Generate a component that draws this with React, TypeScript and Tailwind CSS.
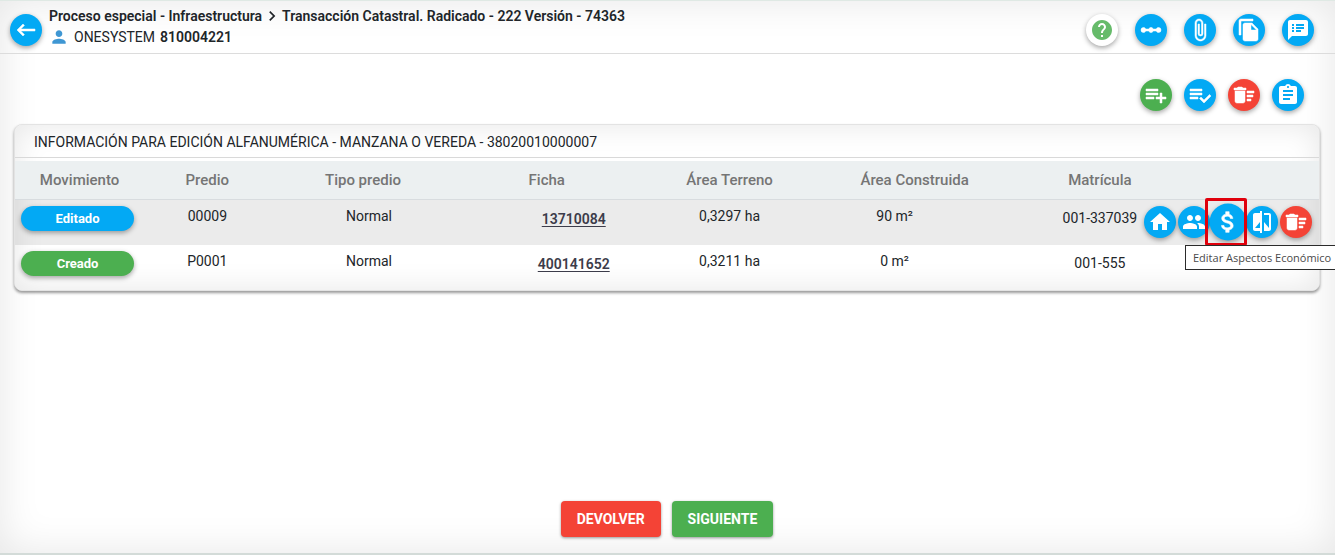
import type { ComponentType, ReactNode } from "react";
import {
  MdAssignment,
  MdAttachFile,
  MdAttachMoney,
  MdCompare,
  MdDeleteSweep,
  MdFileCopy,
  MdHelp,
  MdHome,
  MdKeyboardArrowRight,
  MdKeyboardBackspace,
  MdLinearScale,
  MdPeople,
  MdPerson,
  MdSpeakerNotes,
} from "react-icons/md";

type IconProps = { className?: string };

function ListAddIcon({ className }: IconProps) {
  return (
    <svg viewBox="0 0 24 24" fill="currentColor" stroke="currentColor" className={className}>
      <path d="M14 10H2v2h12v-2zm0-4H2v2h12V6zm4 8v-4h-2v4h-4v2h4v4h2v-4h4v-2h-4zM2 16h8v-2H2v2z" />
    </svg>
  );
}

function ListCheckIcon({ className }: IconProps) {
  return (
    <svg viewBox="0 0 24 24" fill="currentColor" stroke="currentColor" className={className}>
      <path d="M14 10H2v2h12v-2zm0-4H2v2h12V6zM2 16h8v-2H2v2zm19.5-4.5L23 13l-6.99 7-4.51-4.5L13 14l3.01 3 5.49-5.5z" />
    </svg>
  );
}

const tones = {
  blue: "bg-[#03a9f4] text-white",
  green: "bg-[#4caf50] text-white",
  red: "bg-[#f44336] text-white",
  white: "bg-white text-[#66bb6a]",
};

type RoundButtonProps = {
  icon: ComponentType<IconProps>;
  label: string;
  tone?: keyof typeof tones;
  large?: boolean;
  bold?: boolean;
};

function RoundButton({ icon: Icon, label, tone = "blue", large, bold }: RoundButtonProps) {
  return (
    <button
      type="button"
      aria-label={label}
      className={`flex size-8 shrink-0 items-center justify-center rounded-full shadow-[0_2px_5px_rgba(0,0,0,0.35)] ${tones[tone]} ${large ? "scale-115" : ""}`}
    >
      <Icon className={`size-6 ${bold ? "stroke-[0.5] [&>path[fill=none]]:stroke-none" : ""}`} />
    </button>
  );
}

type Row = {
  state: string;
  stateClass: string;
  predio: string;
  tipo: string;
  ficha: string;
  terreno: string;
  construida: string;
  matricula: string;
  rowClass: string;
  actions?: ReactNode;
};

const rows: Row[] = [
  {
    state: "Editado",
    stateClass: "bg-[#03a9f4]",
    predio: "00009",
    tipo: "Normal",
    ficha: "13710084",
    terreno: "0,3297 ha",
    construida: "90 m²",
    matricula: "001-337039",
    rowClass: "bg-black/8",
    actions: (
      <div className="flex justify-end gap-0.5">
        <RoundButton icon={MdHome} label="Editar predio" />
        <RoundButton icon={MdPeople} label="Editar propietarios" />
        <div className="relative">
          <RoundButton icon={MdAttachMoney} label="Editar aspectos económicos" large bold />
          <div className="pointer-events-none absolute -top-2 -left-[7px] h-12 w-[42px] rounded-xs border-3 border-[#e0000c]" />
          <div
            role="tooltip"
            className="absolute top-[39px] -left-[27px] h-[25px] w-[152px] border border-[#2b2b2b] bg-white pl-[7px] text-left font-['Open_Sans',sans-serif] text-[11px] leading-[23px] whitespace-nowrap text-[#4a4a4a]"
          >
            Editar Aspectos Económico
          </div>
        </div>
        <RoundButton icon={MdCompare} label="Comparar" />
        <RoundButton icon={MdDeleteSweep} label="Eliminar" tone="red" bold />
      </div>
    ),
  },
  {
    state: "Creado",
    stateClass: "bg-[#4caf50]",
    predio: "P0001",
    tipo: "Normal",
    ficha: "400141652",
    terreno: "0,3211 ha",
    construida: "0 m²",
    matricula: "001-555",
    rowClass: "",
  },
];

export default function App() {
  return (
    <div className="flex min-h-screen flex-col overflow-hidden border-t border-b-2 border-t-[#dfe9e4] border-b-[#d3dbd8] bg-white font-[Roboto,sans-serif] text-[14px] text-[#212529] shadow-[inset_0_0_40px_rgba(0,0,0,0.1)]">
      <header className="flex h-[53px] items-center gap-[7px] border-b border-[#dcdcdc] pt-1.5 pr-[21px] pl-2.5">
        <RoundButton icon={MdKeyboardBackspace} label="Volver" bold />
        <div className="flex flex-1 flex-col pb-1.5">
          <h1 className="flex items-center text-[14px] leading-5 font-semibold">
            Proceso especial - Infraestructura
            <MdKeyboardArrowRight className="size-5" />
            Transacción Catastral. Radicado - 222 Versión - 74363
          </h1>
          <p className="flex items-center leading-[22px]">
            <MdPerson className="mr-[5px] size-5 text-[#3f97d3]" />
            <span className="mr-[5px]">ONESYSTEM</span>
            <strong className="font-semibold">810004221</strong>
          </p>
        </div>
        <div className="flex gap-[17px]">
          <RoundButton icon={MdHelp} label="Ayuda" tone="white" />
          <RoundButton icon={MdLinearScale} label="Flujo" bold />
          <RoundButton icon={MdAttachFile} label="Adjuntos" bold />
          <RoundButton icon={MdFileCopy} label="Documentos" bold />
          <RoundButton icon={MdSpeakerNotes} label="Observaciones" />
        </div>
      </header>

      <main className="flex flex-1 flex-col pt-[25px] pr-[15px] pl-3.5">
        <div className="flex justify-end gap-3 pr-4">
          <RoundButton icon={ListAddIcon} label="Agregar" tone="green" bold />
          <RoundButton icon={ListCheckIcon} label="Validar" bold />
          <RoundButton icon={MdDeleteSweep} label="Eliminar todo" tone="red" bold />
          <RoundButton icon={MdAssignment} label="Resumen" />
        </div>

        <section className="mt-[13px] rounded-lg border border-[#e3e3e3] bg-white shadow-[0_2px_3px_rgba(0,0,0,0.4),inset_0_0_30px_rgba(0,0,0,0.1)]">
          <h2 className="border-b border-[#d9d9d9] pt-0.5 pl-[19px] text-[14px] leading-[30px] font-normal">
            INFORMACIÓN PARA EDICIÓN ALFANUMÉRICA - MANZANA O VEREDA - 38020010000007
          </h2>
          <table className="mt-[3px] w-full table-fixed border-separate border-spacing-0 text-center">
            <colgroup>
              <col className="w-[9.9%]" />
              <col className="w-[9.7%]" />
              <col className="w-[15.1%]" />
              <col className="w-[16.3%]" />
              <col className="w-[7.6%]" />
              <col className="w-[21.4%]" />
              <col className="w-[6.4%]" />
              <col className="w-[13.6%]" />
            </colgroup>
            <thead>
              <tr className="h-[39px] bg-[#ecf0f1] text-[15px] whitespace-nowrap text-[#757575] [&>th]:border-b [&>th]:border-[#d8dcdf] [&>th]:font-medium">
                <th>Movimiento</th>
                <th>Predio</th>
                <th className="pr-3">Tipo predio</th>
                <th className="pr-[54px]">Ficha</th>
                <th>Área Terreno</th>
                <th className="pr-2">Área Construida</th>
                <th>Matrícula</th>
                <th aria-label="Acciones" />
              </tr>
            </thead>
            <tbody>
              {rows.map((row) => (
                <tr key={row.ficha} className={`h-[45px] align-top leading-5 whitespace-nowrap ${row.rowClass}`}>
                  <td className="pt-1.5 pr-2.5 pl-1.5">
                    <span className={`block h-[25px] rounded-full text-[13px] leading-[25px] font-bold text-white shadow-[0_2px_5px_rgba(0,0,0,0.35)] ${row.stateClass}`}>
                      {row.state}
                    </span>
                  </td>
                  <td className="pt-1.5">{row.predio}</td>
                  <td className="pt-1.5">{row.tipo}</td>
                  <td className="pt-[9px]">
                    <a href="#ficha" className="font-semibold text-[#3c3c4a] underline underline-offset-2">
                      {row.ficha}
                    </a>
                  </td>
                  <td className="pt-1.5">{row.terreno}</td>
                  <td className="pt-1.5 pr-12">{row.construida}</td>
                  <td className="pt-2">{row.matricula}</td>
                  <td className="pt-1.5 pr-[7px]">{row.actions}</td>
                </tr>
              ))}
            </tbody>
          </table>
        </section>

        <div className="mt-auto flex justify-center gap-[11px] pb-4 text-[14px] font-bold text-white">
          <button type="button" className="h-9 rounded bg-[#f44336] px-4 shadow-[0_1px_3px_rgba(0,0,0,0.4)]">
            DEVOLVER
          </button>
          <button type="button" className="h-9 rounded bg-[#4caf50] px-4 shadow-[0_1px_3px_rgba(0,0,0,0.4)]">
            SIGUIENTE
          </button>
        </div>
      </main>
    </div>
  );
}
